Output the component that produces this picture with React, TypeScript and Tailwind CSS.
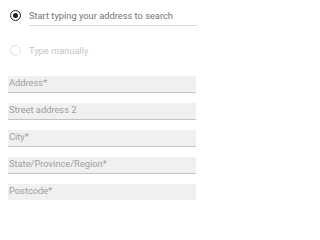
const fields = ['Address*', 'Street address 2', 'City*', 'State/Province/Region*', 'Postcode*']

function Radio({ checked }: { checked: boolean }) {
  return (
    <span
      className={`flex h-[11px] w-[11px] shrink-0 items-center justify-center rounded-full border-[1.5px] ${
        checked ? 'border-[#212121]' : 'border-[#e0e0e0]'
      }`}
    >
      {checked && <span className="h-[5px] w-[5px] rounded-full bg-[#212121]" />}
    </span>
  )
}

export default function App() {
  return (
    <div className="h-[200px] w-[200px] overflow-hidden bg-white font-['Roboto',sans-serif] text-[9.3px]">
      <div className="flex items-start pl-[10px] pt-[10px]">
        <Radio checked />
        <div className="ml-[8px] flex-1 pr-[3px]">
          <div className="h-[15px] leading-[11px] text-[#757575]">Start typing your address to search</div>
          <div className="h-px bg-[#d6d6d6]" />
        </div>
      </div>
      <div className="mt-[18px] flex items-center pl-[10px]">
        <Radio checked={false} />
        <span className="ml-[8px] text-[#c4c4c4]">Type manually</span>
      </div>
      <div className="mt-[18px] flex flex-col gap-[10px] pl-[8px] pr-[4px]">
        {fields.map((f) => (
          <div
            key={f}
            className="h-[17px] border-b border-[#c4c4c4] bg-[#f0f0f0] pl-[1px] leading-[14px] text-[#9e9e9e]"
          >
            {f}
          </div>
        ))}
      </div>
    </div>
  )
}
